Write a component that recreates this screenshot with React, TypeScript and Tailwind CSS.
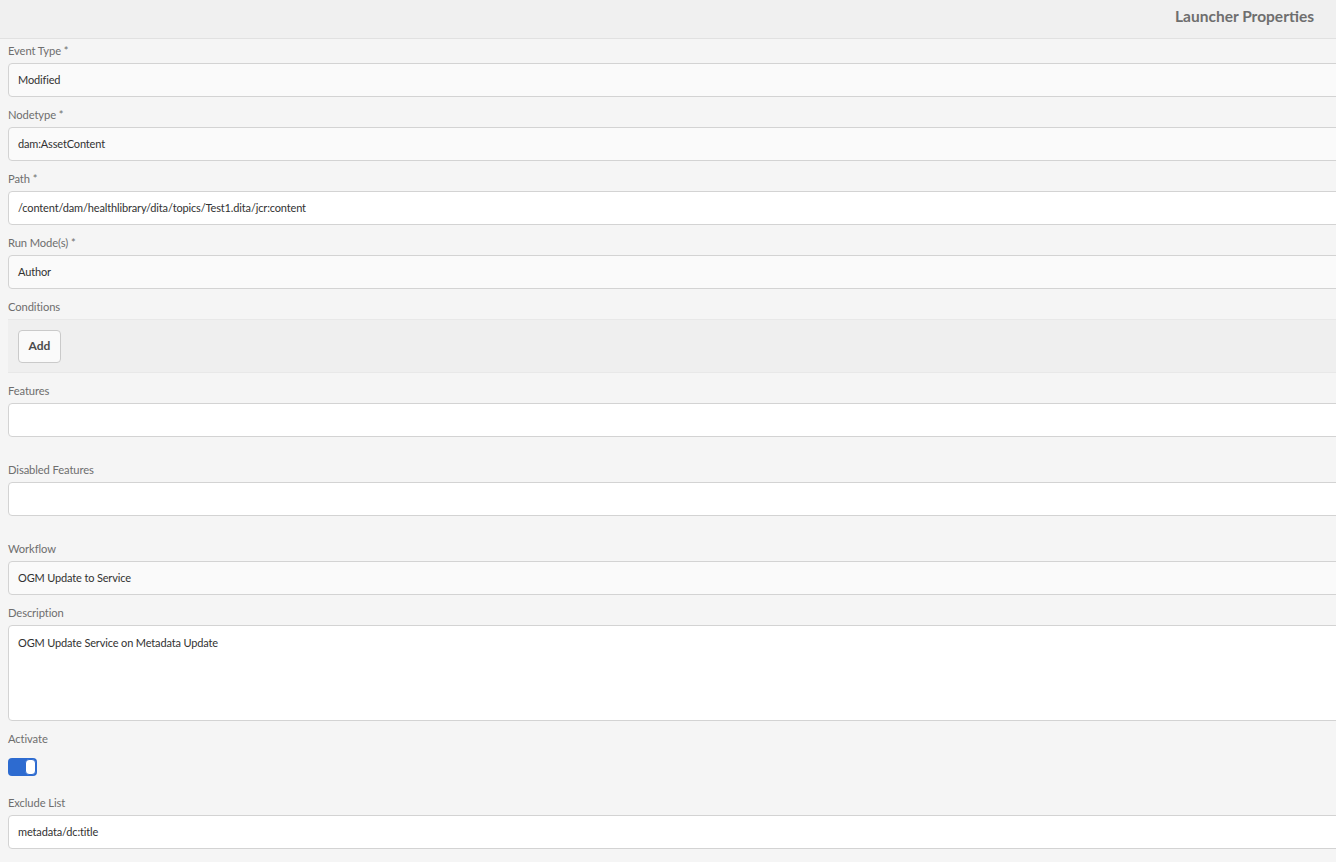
import React from 'react';

const font = { fontFamily: 'Lato, "Open Sans", sans-serif' };

function Label({ children }: { children: React.ReactNode }) {
  return <div className="text-[11.2px] leading-4 text-[#6e6e6e] mb-1 tracking-[-0.1px]">{children}</div>;
}

function Field({ label, value, white, tall, extra }: { label: string; value?: string; white?: boolean; tall?: boolean; extra?: boolean }) {
  return (
    <div className={extra ? 'mb-[25px]' : 'mb-[10px]'}>
      <Label>{label}</Label>
      <div
        className={`-mr-4 border border-[#d3d3d3] rounded-l-[4px] px-[9px] text-[11px] tracking-[-0.15px] text-[#323232] ${white ? 'bg-white' : 'bg-[#fafafa]'} ${tall ? 'h-[96px] pt-[9px]' : 'h-[34px] flex items-center'}`}
      >
        {value}
      </div>
    </div>
  );
}

export default function App() {
  return (
    <div className="min-h-[862px] bg-[#f5f5f5] overflow-hidden" style={font}>
      <div className="h-[39px] bg-[#f0f0f0] border-b border-[#e1e1e1] flex items-center justify-end pr-[22px] pb-[5px]">
        <span className="text-[15.5px] font-bold text-[#6e6e6e]">Launcher Properties</span>
      </div>
      <div className="pl-2 pt-[4px]">
        <Field label="Event Type *" value="Modified" />
        <Field label="Nodetype *" value="dam:AssetContent" />
        <Field label="Path *" value="/content/dam/healthlibrary/dita/topics/Test1.dita/jcr:content" white />
        <Field label="Run Mode(s) *" value="Author" />

        <div className="mb-[10px]">
          <Label>Conditions</Label>
          <div className="-mr-4 h-[54px] bg-[#efefef] border-y border-[#e8e8e8] flex items-center pl-[10px]">
            <button className="h-[33px] w-[43px] bg-[#fafafa] border border-[#cacaca] rounded-[4px] text-[12px] font-bold text-[#4b4b4b]">
              Add
            </button>
          </div>
        </div>

        <Field label="Features" white extra />
        <Field label="Disabled Features" white extra />
        <Field label="Workflow" value="OGM Update to Service" />
        <Field label="Description" value="OGM Update Service on Metadata Update" white tall />

        <div className="mb-[19px]">
          <Label>Activate</Label>
          <div className="mt-[11px] w-[29px] h-[18px] rounded-[4px] bg-[#2d6bd0] relative">
            <div className="absolute right-[1px] top-[1px] w-[11px] h-[16px] rounded-[4px] bg-white border border-[#2d6bd0]" />
          </div>
        </div>

        <Field label="Exclude List" value="metadata/dc:title" white />
      </div>
    </div>
  );
}
